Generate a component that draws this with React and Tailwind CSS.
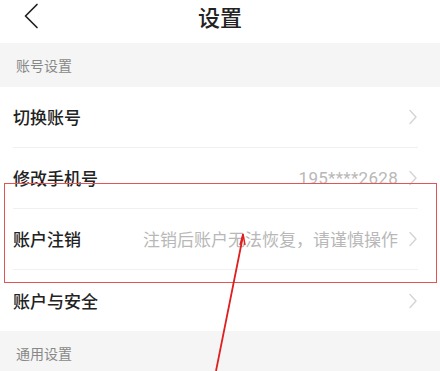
const font = { fontFamily: '"Noto Sans CJK SC", "Noto Sans", sans-serif' }

function Chevron() {
  return (
    <svg width="10" height="16" viewBox="0 0 10 16" className="ml-[10px]">
      <path d="M2 1.5 L8 8 L2 14.5" fill="none" stroke="#d4d4d4" strokeWidth="1.4" strokeLinecap="round" strokeLinejoin="round" />
    </svg>
  )
}

function Row({ title, value, divider = true }) {
  return (
    <div className="flex h-[61px] items-center pl-[13px] pr-[22px]">
      <div className={`flex h-full flex-1 items-center ${divider ? 'border-b border-[#f0f0f0]' : ''}`}>
        <span className="text-[17px] font-medium text-[#222]">{title}</span>
        <span className="ml-auto text-[17px] text-[#b8b8b8]">{value}</span>
        <Chevron />
      </div>
    </div>
  )
}

export default function App() {
  return (
    <div className="relative h-[371px] w-[440px] overflow-hidden bg-white" style={font}>
      <header className="relative flex h-[43px] items-start justify-center pt-[2px]">
        <svg width="16" height="26" viewBox="0 0 16 26" className="absolute left-[23px] top-[3px]">
          <path d="M14 1.5 L2.5 13 L14 24.5" fill="none" stroke="#222" strokeWidth="1.7" strokeLinecap="round" strokeLinejoin="round" />
        </svg>
        <h1 className="text-[22px] font-medium leading-[28px] text-[#222]">设置</h1>
      </header>
      <div className="flex h-[44px] items-center bg-[#f5f5f5] pl-[16px] text-[14px] text-[#888]">账号设置</div>
      <Row title="切换账号" />
      <Row title="修改手机号" value={<span className="tracking-[0.3px]" style={{ fontFamily: 'Roboto, sans-serif' }}>195****2628</span>} />
      <Row title="账户注销" value="注销后账户无法恢复，请谨慎操作" />
      <Row title="账户与安全" divider={false} />
      <div className="flex h-[44px] items-center bg-[#f5f5f5] pl-[16px] text-[14px] text-[#888]">通用设置</div>

      <div className="pointer-events-none absolute left-[4px] top-[183px] h-[100px] w-[433px] border-[1.5px] border-[#e25555]" />
      <svg className="pointer-events-none absolute left-0 top-0" width="440" height="371">
        <line x1="243" y1="236" x2="216" y2="371" stroke="#e02020" strokeWidth="1.8" />
        <path d="M243 234 L240 245 M243 234 L245 245" stroke="#e02020" strokeWidth="1.5" fill="none" />
      </svg>
    </div>
  )
}
